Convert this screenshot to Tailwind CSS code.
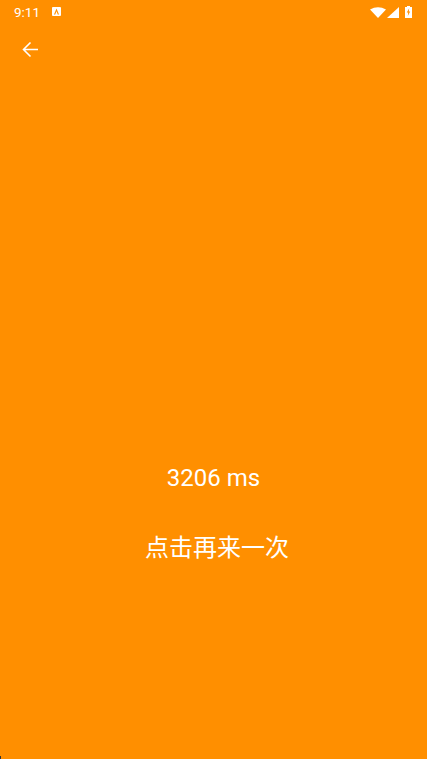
<!doctype html>
<html>
<head>
<meta charset="utf-8">
<script src="https://cdn.jsdelivr.net/npm/@tailwindcss/browser@4"></script>
</head>
<body class="m-0">
<div class="relative flex flex-col h-[759px] w-[427px] overflow-hidden bg-[#ff8f00] text-white font-['Roboto','Noto_Sans_CJK_SC',sans-serif]">
  <div class="flex items-center h-[24px] pl-[14px] pr-[15px] shrink-0">
    <span class="text-[13.5px] font-normal leading-[24px] w-[38px]">9:11</span>
    <svg class="w-[9px] h-[9px] mb-[1px]" viewBox="0 0 10 10"><rect width="10" height="10" rx="1" fill="#fff"/><path d="M5 1.8 L7.8 8.2 H6.4 L5 4.6 L3.6 8.2 H2.2 Z" fill="#ff8f00"/></svg>
    <div class="ml-auto flex items-center">
      <svg class="w-[16px] h-[11px]" viewBox="0 0 16 11"><path d="M0 2.6 Q8 -2.2 16 2.6 L8 11 Z" fill="#fff"/></svg>
      <svg class="ml-[1px] w-[12px] h-[11px]" viewBox="0 0 12 11"><path d="M12 0 V11 H0 Z" fill="#fff"/></svg>
      <svg class="ml-[6px] w-[7px] h-[12px]" viewBox="0 0 7 12"><path d="M2 0 H5 V1 H7 V12 H0 V1 H2 Z" fill="#fff"/><path d="M4.2 2.2 L1.8 6.6 H3.2 L2.8 10 L5.2 5.4 H3.8 Z" fill="#ff8f00"/></svg>
    </div>
  </div>
  <div class="flex items-center h-[50px] pl-[18px] shrink-0">
    <svg class="w-[24px] h-[24px]" viewBox="0 0 24 24" fill="none" stroke="#fff" stroke-width="1.6"><path d="M20 12.5H6M12.5 5.5 5.5 12.5 12.5 19.5"/></svg>
  </div>
  <div class="flex flex-col items-center pt-[390px]">
    <p class="text-[24px] leading-[29px] m-0">3206 ms</p>
    <p class="text-[24px] leading-[32px] mt-[39px] pl-[7px] m-0">点击再来一次</p>
  </div>
  <div class="absolute left-0 bottom-0 w-[1px] h-[3px] bg-[#333]"></div>
</div>
</body>
</html>
